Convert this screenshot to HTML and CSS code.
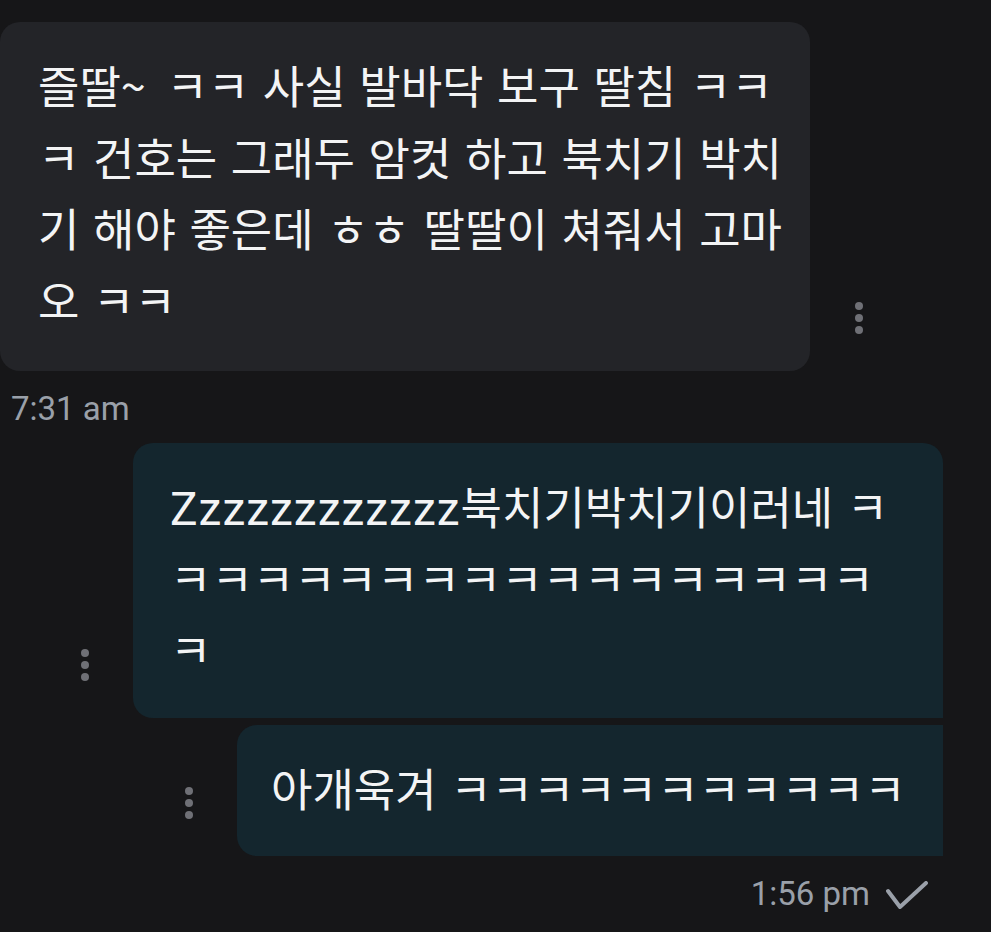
FILE: index.html
```html
<!DOCTYPE html>
<html lang="ko">
<head>
<meta charset="utf-8">
<link rel="stylesheet" href="styles.css">
</head>
<body>
<div class="chat">
  <div class="row row-in">
    <div class="bubble bubble-in">즐딸<span class="tilde">~</span> ㅋㅋ 사실 발바닥 보구 딸침 ㅋㅋ<br>ㅋ 건호는 그래두 암컷 하고 북치기 박치<br>기 해야 좋은데 ㅎㅎ 딸딸이 쳐줘서 고마<br>오 ㅋㅋ</div>
    <div class="dots"><span></span><span></span><span></span></div>
  </div>
  <div class="time time-in">7:31 am</div>

  <div class="row row-out">
    <div class="dots"><span></span><span></span><span></span></div>
    <div class="bubble bubble-out out-first"><span class="latin">Zzzzzzzzzzzz</span>북치기박치기이러네 ㅋ<br>ㅋㅋㅋㅋㅋㅋㅋㅋㅋㅋㅋㅋㅋㅋㅋㅋㅋ<br>ㅋ</div>
  </div>
  <div class="row row-out">
    <div class="dots"><span></span><span></span><span></span></div>
    <div class="bubble bubble-out out-last">아개욱겨 ㅋㅋㅋㅋㅋㅋㅋㅋㅋㅋㅋ</div>
  </div>
  <div class="status">
    <span class="time">1:56 pm</span>
    <svg class="check" width="42" height="30" viewBox="0 0 42 30"><path d="M2 10 L14 26 L40 2" fill="none" stroke="#9aa0a9" stroke-width="4" stroke-linecap="round" stroke-linejoin="round"/></svg>
  </div>
</div>
</body>
</html>
```
FILE: styles.css
```css
html, body {
  margin: 0;
  padding: 0;
  background: #161618;
}
.chat {
  width: 991px;
  height: 932px;
  padding-top: 22px;
  box-sizing: border-box;
  overflow: hidden;
}
.row {
  display: flex;
  align-items: flex-end;
}
.row-out {
  justify-content: flex-end;
  padding-right: 48px;
  gap: 44px;
  margin-top: 7px;
}
.row-in {
  gap: 45px;
}
.bubble {
  box-sizing: border-box;
  font-family: "Noto Sans CJK KR", "Noto Sans", sans-serif;
  font-size: 45px;
  word-spacing: 1px;
  line-height: 71.5px;
  color: #f3f4f5;
  white-space: nowrap;
  padding: 27px 0 36px 38px;
}
.bubble-in {
  width: 810px;
  background: #232428;
  border-radius: 20px;
  padding-left: 38px;
}
.tilde {
  letter-spacing: 7px;
}
.bubble-out {
  background: #14262e;
  padding-bottom: 33px;
}
.out-first {
  width: 810px;
  border-radius: 20px 20px 0 20px;
  padding-left: 37px;
}
.out-last {
  width: 706px;
  border-radius: 20px 0 0 20px;
  padding-left: 34px;
}
.latin {
  font-family: Roboto, "Noto Sans", sans-serif;
  font-size: 46px;
  line-height: 1;
  letter-spacing: 1px;
  word-spacing: 0;
}
.dots {
  display: flex;
  flex-direction: column;
  gap: 4px;
  margin-bottom: 37px;
}
.dots span {
  width: 8px;
  height: 8px;
  border-radius: 50%;
  background: #6f7076;
}
.time {
  font-family: Roboto, "Liberation Sans", sans-serif;
  font-size: 33px;
  line-height: 40px;
  color: #9aa0a9;
}
.time-in {
  margin: 18px 0 14px 11px;
}
.status {
  display: flex;
  justify-content: flex-end;
  align-items: center;
  gap: 16px;
  padding-right: 63px;
  margin-top: 18px;
}
.check {
  display: block;
  margin-top: 3px;
}
```
